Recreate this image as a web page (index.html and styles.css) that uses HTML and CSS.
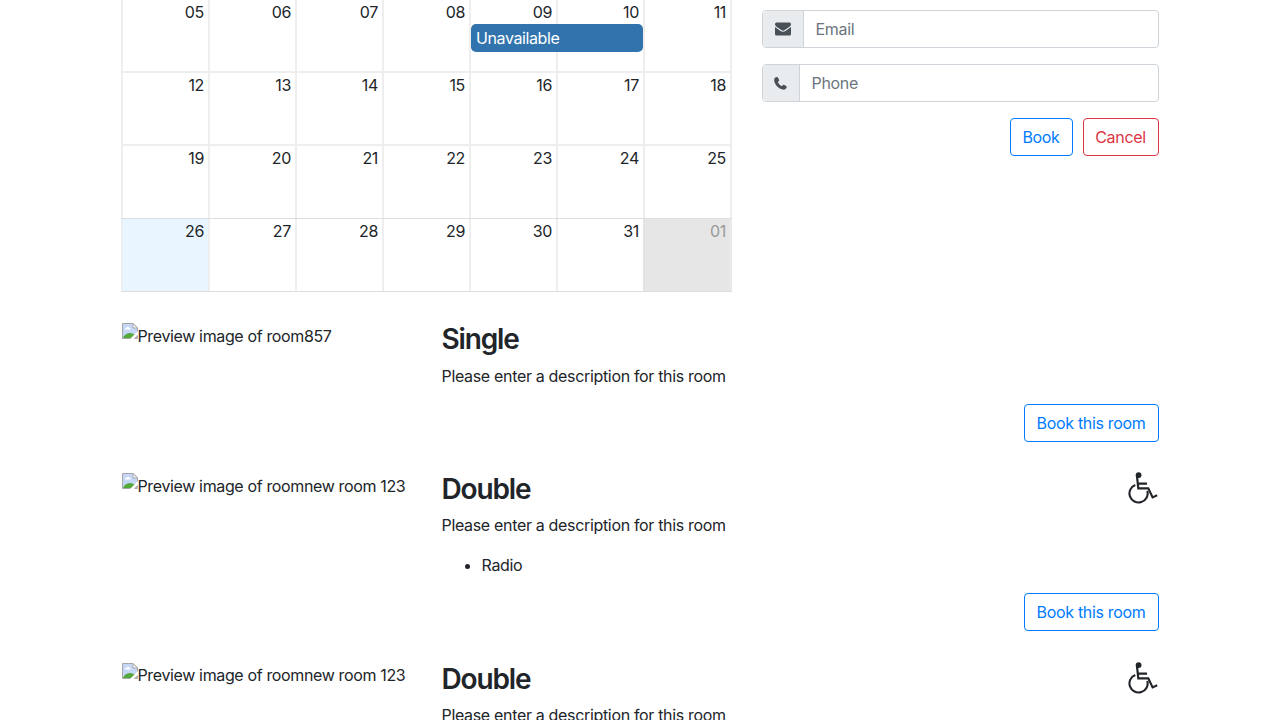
FILE: index.html
```
<!DOCTYPE html>
<html lang="en">
<head>
<meta charset="utf-8">
<title>Rooms</title>
<link rel="stylesheet" href="styles.css">
</head>
<body>
<svg class="defs" width="0" height="0">
  <symbol id="broken" viewBox="0 0 16 16">
    <path d="M.5 .5H11L15.5 5V15.5H.5Z" fill="#c5d6f7" stroke="#a6a6a6"/>
    <path d="M11 .5V5H15.5Z" fill="#fff" stroke="#a6a6a6"/>
    <path d="M3 6.5C2.6 5 4.2 4.6 4.5 5C5 3.2 7.5 3.5 7.5 5C9 5 9 6.5 8.3 6.5Z" fill="#fff"/>
    <path d="M1 15C2 12 5 9.8 8 10C10 10 12 11 13 12V15Z" fill="#55a83c"/>
    <path d="M8 16L16 8V12L12 16Z" fill="#fff"/>
    <path d="M12 15.5H15.5V12Z" fill="#b5b5b5"/>
  </symbol>
  <symbol id="wheelchair" viewBox="0 0 30 32">
    <circle cx="10.6" cy="3.1" r="2.9" fill="#212529"/>
    <path d="M8.9 3.5L10.3 16.4H20.3L24.6 25.4L29.2 23.3M10.5 11.6H19" fill="none" stroke="#212529" stroke-width="2.2"/>
    <path d="M7.3 12.9A9.1 9.1 0 1 0 19.3 18.9" fill="none" stroke="#212529" stroke-width="2.1"/>
  </symbol>
</svg>
<main class="container">
  <section class="booking">
    <div class="calendar">
      <div class="week"><span class="day">05</span><span class="day">06</span><span class="day">07</span><span class="day">08</span><span class="day">09</span><span class="day">10</span><span class="day">11</span><div class="event"><span class="label">Unavailable</span></div></div>
      <div class="week"><span class="day">12</span><span class="day">13</span><span class="day">14</span><span class="day">15</span><span class="day">16</span><span class="day">17</span><span class="day">18</span></div>
      <div class="week tall"><span class="day">19</span><span class="day">20</span><span class="day">21</span><span class="day">22</span><span class="day">23</span><span class="day">24</span><span class="day">25</span></div>
      <div class="week last"><span class="day today">26</span><span class="day">27</span><span class="day">28</span><span class="day">29</span><span class="day">30</span><span class="day">31</span><span class="day off">01</span></div>
    </div>
    <form class="form">
      <div class="field"><span class="addon mail"><svg width="16" height="14" viewBox="0 0 16 14"><path d="M1.5 .5H14.5Q16 .5 16 2.2Q16 3.5 14.5 4.7L9.7 8.1Q8 9.2 6.3 8.1L1.5 4.7Q0 3.5 0 2.2Q0 .5 1.5 .5ZM0 5L5.5 9Q8 10.6 10.5 9L16 5V12Q16 13.5 14.5 13.5H1.5Q0 13.5 0 12Z" fill="#495057"/></svg></span><span class="placeholder">Email</span></div>
      <div class="field"><span class="addon"><svg width="13" height="13" viewBox="0 0 13 13"><path d="M3.1 .1Q3.7 0 4 .7L5.2 3Q5.4 3.4 4.9 3.9L3.9 5Q3.7 5.4 5.4 7.4Q7.4 9.2 7.9 9L9.1 7.9Q9.5 7.5 10 7.8L12.5 9.2Q12.9 9.4 12.6 10.4Q12 12.4 10 12.7C8 12.9 5 11.3 3.2 9.6C1.4 7.8 0 5 .1 3.1Q.2 1.4 1.3 .6Q2.2 .1 3.1 .1Z" fill="#495057"/></svg></span><span class="placeholder">Phone</span></div>
      <div class="actions"><a class="btn book">Book</a><a class="btn cancel">Cancel</a></div>
    </form>
  </section>
  <section class="room first">
    <div class="preview"><svg class="broken" width="16" height="16"><use href="#broken"/></svg><span>Preview image of room857</span></div>
    <div class="info"><h3>Single</h3><p>Please enter a description for this room</p><a class="btn wide">Book this room</a></div>
  </section>
  <section class="room">
    <div class="preview"><svg class="broken" width="16" height="16"><use href="#broken"/></svg><span>Preview image of roomnew room 123</span></div>
    <div class="info"><div class="head"><h3>Double</h3><svg class="access" width="30" height="32"><use href="#wheelchair"/></svg></div><p>Please enter a description for this room</p><ul><li>Radio</li></ul><a class="btn wide">Book this room</a></div>
  </section>
  <section class="room third">
    <div class="preview"><svg class="broken" width="16" height="16"><use href="#broken"/></svg><span>Preview image of roomnew room 123</span></div>
    <div class="info"><div class="head"><h3>Double</h3><svg class="access" width="30" height="32"><use href="#wheelchair"/></svg></div><p>Please enter a description for this room</p></div>
  </section>
</main>
</body>
</html>
```
FILE: styles.css
```
* { box-sizing: border-box; }
html, body { height: 720px; overflow: hidden; }
body { margin: 0; background: #fff; color: #212529; font: 16px/24px Inter, "Liberation Sans", sans-serif; letter-spacing: -0.33px; }
.defs { position: absolute; }
.container { width: 1037.5px; margin-left: 121px; }
.booking { display: flex; gap: 29.5px; height: 323px; }
.calendar { width: 611px; flex: none; }
.week { position: relative; display: grid; grid-template-columns: repeat(6, 87px) 89px; height: 73px; border-top: 2px solid #eee; }
.week:first-child { height: 71px; border-top: 0; }
.week.tall { height: 74px; }
.week.last { height: 74px; border-top: 1px solid #ddd; border-bottom: 1px solid #ddd; }
.day { border-left: 2px solid #eee; padding-right: 4px; text-align: right; }
.day:nth-child(7) { border-right: 2px solid #eee; }
.week:nth-child(2) .day, .week:nth-child(3) .day, .week.last .day { line-height: 25px; }
.today { background: #eaf6ff; border-left-color: #eaf0f5; }
.week .off { background: #e6e6e6; color: #999; border-left-color: #e3e3e3; border-right-color: #eaeaea; }
.event { position: absolute; left: 350px; top: 23.5px; width: 172px; height: 28px; padding-left: 5px; border-radius: 5px; background: #3174ad; color: #fff; line-height: 29px; letter-spacing: -0.4px; }
.form { width: 397px; padding-top: 10px; }
.field { display: flex; height: 38px; margin-bottom: 16px; border: 1px solid #ced4da; border-radius: 4px; overflow: hidden; }
.addon { display: flex; align-items: center; justify-content: center; width: 37px; background: #e9ecef; border-right: 1px solid #ced4da; }
.mail { width: 41px; }
.placeholder { padding-left: 12px; line-height: 37px; color: #6c757d; }
.actions { display: flex; justify-content: flex-end; gap: 10px; }
.btn { display: flex; align-items: center; justify-content: center; height: 38px; border: 1px solid #007bff; border-radius: 4px; color: #007bff; }
.book { width: 63px; }
.cancel { width: 76px; border-color: #dc3545; color: #dc3545; }
.room { display: grid; grid-template-columns: 320.5px 1fr; height: 189.5px; }
.room.first { height: 150px; }
.room.third { height: 57.5px; }
.preview { display: flex; align-items: flex-start; padding-left: .5px; letter-spacing: -0.36px; }
.preview span { padding-top: 1px; }
.third .preview span { padding-top: 0; }
.info { display: flex; flex-direction: column; }
.head { display: flex; justify-content: space-between; height: 40px; }
.access { margin: -1px 1px 0 0; }
h3 { height: 33px; margin: 0 0 8px; font-size: 28px; line-height: 33px; font-weight: 600; letter-spacing: -1.15px; }
.third h3 { line-height: 32px; }
p { margin: 0 0 16px; }
ul { margin: 0 0 16px; padding-left: 40px; }
.wide { width: 135px; align-self: flex-end; }
.first .wide { margin-top: -.5px; }
```
